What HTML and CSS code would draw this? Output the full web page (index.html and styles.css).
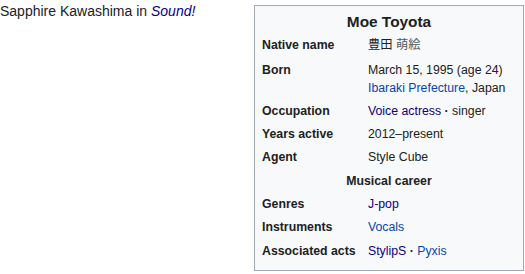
FILE: index.html
```html
<!DOCTYPE html>
<html>
<head>
<meta charset="utf-8">
<link rel="stylesheet" href="styles.css">
</head>
<body>
<div class="page">
  <p class="lead">Sapphire Kawashima in <a class="visited" href="#"><i>Sound!</i></a></p>
  <aside class="infobox">
    <div class="title">Moe Toyota</div>
    <div class="grid">
      <div class="label native">Native name</div>
      <div class="value native">豊田 <span class="soft">萌絵</span></div>
      <div class="label">Born</div>
      <div class="value">March 15, 1995 (age 24)<br><a href="#">Ibaraki Prefecture</a>, Japan</div>
      <div class="label">Occupation</div>
      <div class="value"><a class="visited" href="#">Voice actress</a><span class="sep"> · </span>singer</div>
      <div class="label">Years active</div>
      <div class="value">2012–present</div>
      <div class="label">Agent</div>
      <div class="value">Style Cube</div>
      <div class="header">Musical career</div>
      <div class="label">Genres</div>
      <div class="value"><a class="visited" href="#">J-pop</a></div>
      <div class="label">Instruments</div>
      <div class="value"><a href="#">Vocals</a></div>
      <div class="label">Associated acts</div>
      <div class="value"><a class="visited" href="#">StylipS</a><span class="sep"> · </span><a href="#">Pyxis</a></div>
    </div>
  </aside>
</div>
</body>
</html>
```
FILE: styles.css
```css
html, body {
  margin: 0;
  padding: 0;
  background: #ffffff;
}
body {
  font-family: "Liberation Sans", Arial, "Noto Sans CJK JP", sans-serif;
  font-size: 14px;
  color: #202122;
}
a {
  color: #0645ad;
  text-decoration: none;
}
a.visited {
  color: #0b0080;
}
.page {
  display: flex;
  justify-content: space-between;
  align-items: flex-start;
}
.lead {
  margin: 0;
  line-height: 22px;
}
.infobox {
  width: 260px;
  margin: 5px 1px 0 0;
  border: 1px solid #a2a9b1;
  background: #f8f9fa;
  font-size: 12.3px;
  line-height: 18px;
  padding: 3px 4px 10px 4px;
  color: #202122;
}
.title {
  text-align: center;
  font-weight: bold;
  font-size: 15.4px;
  line-height: 20px;
  padding: 3px 0 4px;
}
.grid {
  display: grid;
  grid-template-columns: 106px 1fr;
  row-gap: 5.2px;
}
.label {
  font-weight: bold;
  padding-left: 3px;
}
.value {
  padding-left: 3px;
}
.sep {
  font-weight: bold;
}
.native {
  padding-bottom: 1.5px;
}
.soft {
  color: #54595d;
}
.header {
  grid-column: 1 / 3;
  text-align: center;
  font-weight: bold;
  padding-top: 0.5px;
}
```
